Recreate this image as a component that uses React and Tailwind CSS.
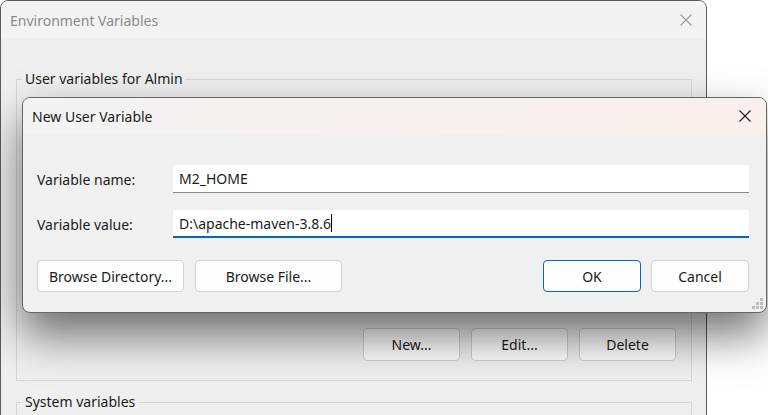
import React from "react";

const font = { fontFamily: '"Segoe UI", "Noto Sans", "Open Sans", sans-serif' };

function CloseIcon({ className }) {
  return (
    <svg width="12" height="12" viewBox="0 0 12 12" className={className}>
      <path d="M0.5 0.5 L11.5 11.5 M11.5 0.5 L0.5 11.5" stroke="currentColor" strokeWidth="1.1" fill="none" />
    </svg>
  );
}

function ResizeGrip() {
  const dots = [
    [8, 0],
    [4, 4],
    [8, 4],
    [0, 8],
    [4, 8],
    [8, 8],
  ];
  return (
    <svg width="11" height="11" viewBox="0 0 11 11" className="absolute right-[3px] bottom-[3px]">
      {dots.map(([x, y], i) => (
        <rect key={i} x={x} y={y} width="3" height="3" fill="#bdbdbd" />
      ))}
    </svg>
  );
}

function BgButton({ children }) {
  return (
    <button className="w-[97px] h-[33px] rounded-[4px] border border-[#d0d0d0] bg-[#fdfdfd] text-[14px] text-[#1b1b1b]">
      {children}
    </button>
  );
}

function DlgButton({ children, w = "w-[98px]", primary }) {
  return (
    <button
      className={`${w} h-[32px] rounded-[4px] border bg-[#fdfdfd] text-[14px] text-[#1b1b1b] ${
        primary ? "border-[#0067c0]" : "border-[#d4d4d4]"
      }`}
    >
      {children}
    </button>
  );
}

export default function App() {
  return (
    <div className="relative w-[768px] h-[415px] overflow-hidden bg-white" style={font}>
      {/* Environment Variables window (behind) */}
      <div className="w-[707px] h-[440px] border border-[#5c5c5c] rounded-t-[8px] bg-[#efefef] overflow-hidden">
        <div className="h-[38px] bg-[#f3f3f3] flex items-center justify-between pl-[9px] pr-[14px]">
          <span className="text-[14px] text-[#8a8a8a]">Environment Variables</span>
          <CloseIcon className="text-[#9a9a9a]" />
        </div>
        <div className="pt-[31px] pl-[15px] pr-[14px]">
          <fieldset className="h-[311px] border border-[#d6d6d6] flex flex-col justify-end">
            <legend className="ml-[6px] px-[2px] text-[14px] text-[#1b1b1b] leading-[18px]">
              User variables for Almin
            </legend>
            <div className="flex justify-end gap-[11px] pr-[15px] pb-[19px]">
              <BgButton>New...</BgButton>
              <BgButton>Edit...</BgButton>
              <BgButton>Delete</BgButton>
            </div>
          </fieldset>
          <fieldset className="mt-[12px] h-[60px] border border-[#d6d6d6]">
            <legend className="ml-[6px] px-[2px] text-[14px] text-[#1b1b1b] leading-[18px]">
              System variables
            </legend>
          </fieldset>
        </div>
      </div>

      {/* New User Variable dialog */}
      <div className="absolute left-[22px] top-[97px] w-[745px] h-[216px] rounded-[8px] border border-[#666666] bg-[#f0f0f0] overflow-hidden shadow-[0_22px_45px_rgba(0,0,0,0.55)]">
        <div className="h-[36px] flex items-center justify-between pl-[9px] pr-[15px] bg-gradient-to-r from-[#f3f3f3] to-[#f9efec]">
          <span className="text-[14px] text-[#1b1b1b]">New User Variable</span>
          <CloseIcon className="text-[#1b1b1b]" />
        </div>
        <div className="pt-[31px] pl-[14px] pr-[17px]">
          <div className="flex items-center">
            <span className="w-[136px] text-[14px] text-[#1b1b1b]">Variable name:</span>
            <div className="flex-1 h-[28px] bg-white border-b border-[#8a8a8a] rounded-t-[3px] flex items-center px-[6px] text-[14px] text-[#1b1b1b]">
              M2_HOME
            </div>
          </div>
          <div className="flex items-center mt-[17px]">
            <span className="w-[136px] text-[14px] text-[#1b1b1b]">Variable value:</span>
            <div className="flex-1 h-[28px] bg-white border-b-2 border-[#0067c0] rounded-t-[3px] flex items-center px-[6px] text-[14px] text-[#1b1b1b]">
              D:\apache-maven-3.8.6
              <span className="w-px h-[18px] bg-black" />
            </div>
          </div>
          <div className="flex items-center mt-[22px]">
            <div className="flex gap-[11px]">
              <DlgButton w="w-[147px]">Browse Directory...</DlgButton>
              <DlgButton w="w-[147px]">Browse File...</DlgButton>
            </div>
            <div className="ml-auto flex gap-[10px]">
              <DlgButton primary>OK</DlgButton>
              <DlgButton>Cancel</DlgButton>
            </div>
          </div>
        </div>
        <ResizeGrip />
      </div>
    </div>
  );
}
